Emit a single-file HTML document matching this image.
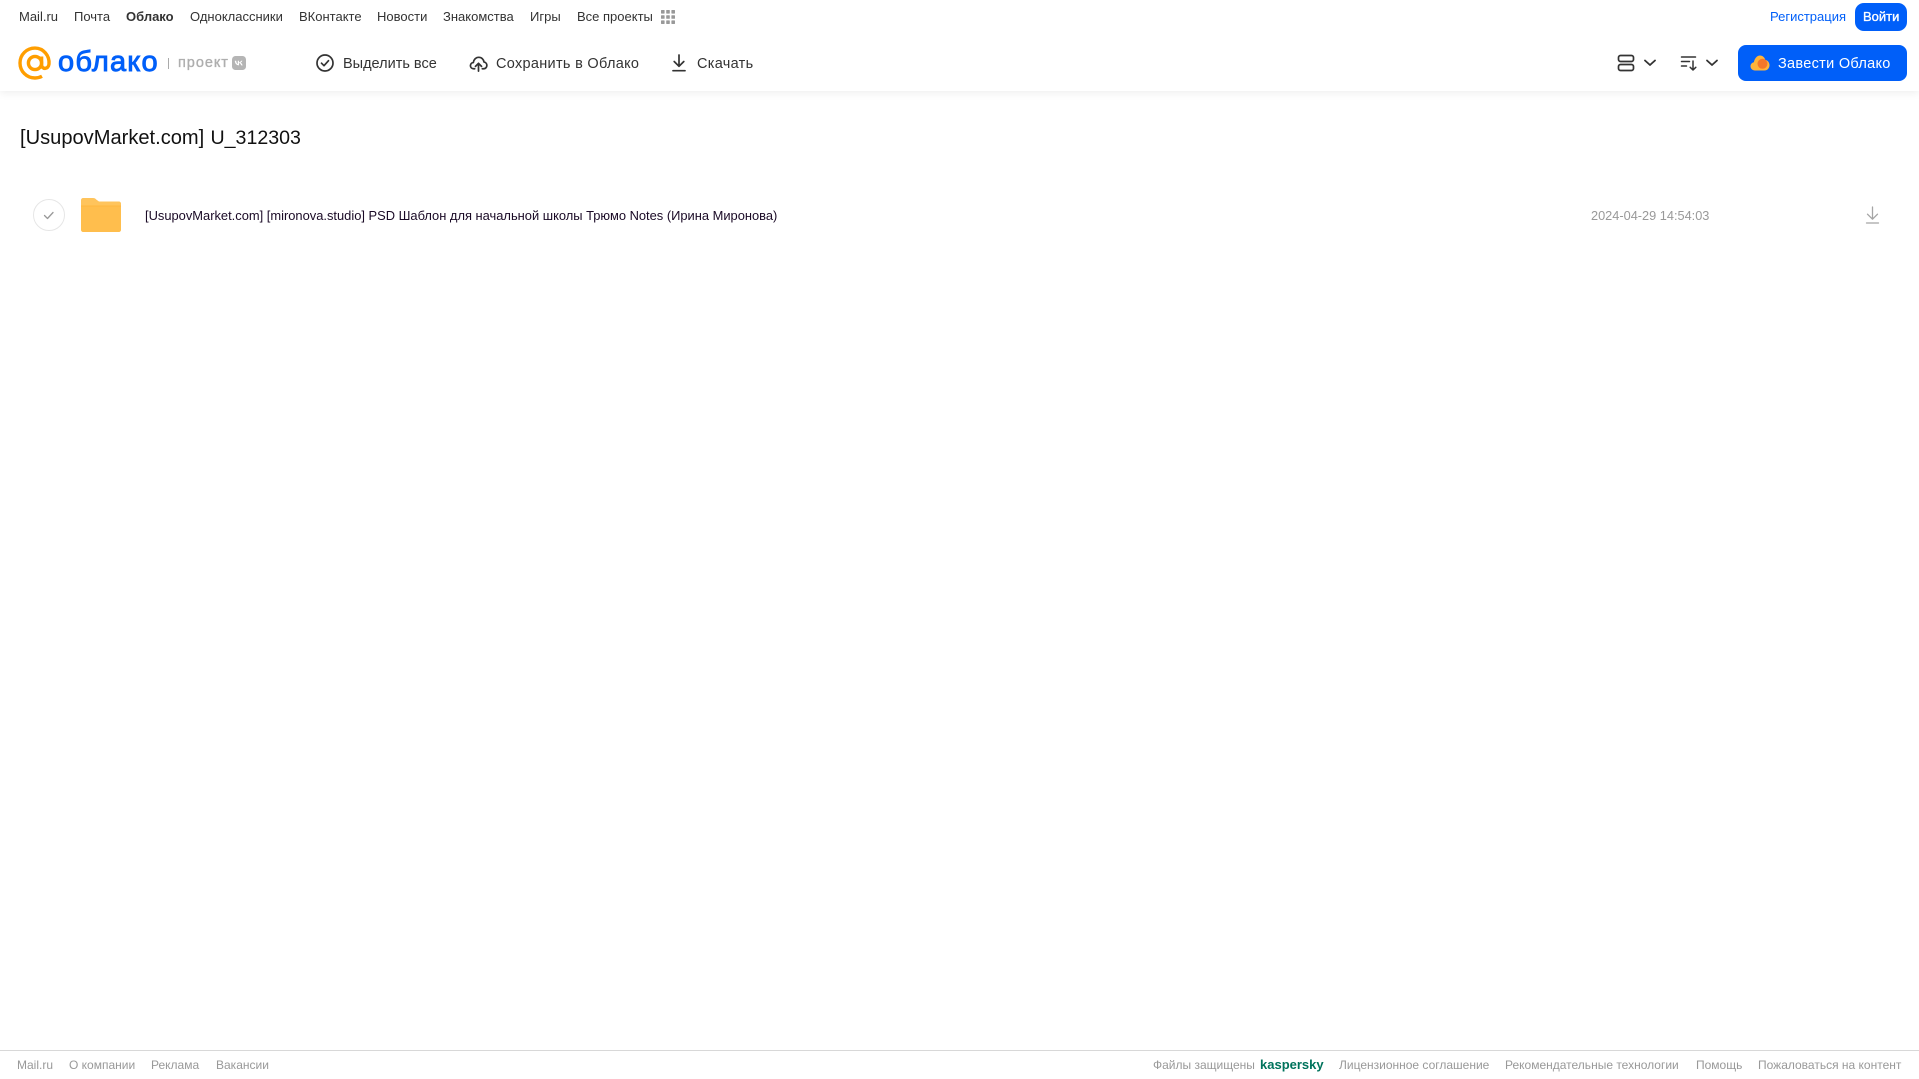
<!DOCTYPE html>
<html lang="ru"><head><meta charset="utf-8"><title>Облако</title>
<style>
html,body{margin:0;padding:0;background:#fff}
body{width:1919px;height:1079px;position:relative;overflow:hidden;font-family:"Liberation Sans","Noto Sans CJK JP",sans-serif}
.t{position:absolute;white-space:nowrap;line-height:16px;height:16px}
.n{top:9px;font-size:13px;color:#333}
.b{top:55.5px;font-size:14.5px;color:#333;letter-spacing:.3px}
.f{top:1057px;font-size:12px;color:#999}
svg{position:absolute;display:block}
#hd{position:absolute;left:0;top:0;width:1919px;height:91px;background:#fff;box-shadow:0 2px 8px rgba(0,0,0,.07)}
#btn1{position:absolute;left:1855px;top:3px;width:52px;height:28px;background:#005ff9;border-radius:9px}
#btn2{position:absolute;left:1738px;top:45px;width:169px;height:36px;background:#005ff9;border-radius:8px}
#fl{position:absolute;left:0;top:1050px;width:1919px;height:1px;background:#d8d8d8}
</style></head><body>
<div id="hd"></div>
<span class="t n" style="left:19px">Mail.ru</span>
<span class="t n" style="left:74px">Почта</span>
<span class="t n" style="left:126px;font-weight:bold">Облако</span>
<span class="t n" style="left:190px">Одноклассники</span>
<span class="t n" style="left:299px">ВКонтакте</span>
<span class="t n" style="left:377px">Новости</span>
<span class="t n" style="left:443px">Знакомства</span>
<span class="t n" style="left:530px">Игры</span>
<span class="t n" style="left:577px">Все проекты</span>
<svg style="left:660px;top:9px" width="16" height="16" viewBox="0 0 16 16" fill="#999"><rect x="1" y="1" width="3.6" height="3.6" rx=".6"/><rect x="6.2" y="1" width="3.6" height="3.6" rx=".6"/><rect x="11.4" y="1" width="3.6" height="3.6" rx=".6"/><rect x="1" y="6.2" width="3.6" height="3.6" rx=".6"/><rect x="6.2" y="6.2" width="3.6" height="3.6" rx=".6"/><rect x="11.4" y="6.2" width="3.6" height="3.6" rx=".6"/><rect x="1" y="11.4" width="3.6" height="3.6" rx=".6"/><rect x="6.2" y="11.4" width="3.6" height="3.6" rx=".6"/><rect x="11.4" y="11.4" width="3.6" height="3.6" rx=".6"/></svg>
<span class="t n" style="left:1770px;color:#005ff9">Регистрация</span>
<div id="btn1"></div>
<span class="t n" style="left:1863px;color:#fff;-webkit-text-stroke:.35px #fff">Войти</span>

<svg style="left:18px;top:46px" width="34" height="34" viewBox="0 0 34 34" fill="none" stroke="#ff9e00" stroke-width="3.4"><circle cx="17" cy="17" r="6.6"/><path d="M23.6 10.5v8.2c0 5 6.8 5 7.4-.6.8-8.2-5.5-16-14-16C8.500 2.100 2 8.700 2 17s6.500 15 15 15c2.800 0 5-.6 7-1.700"/></svg>
<span class="t" id="logo" style="left:58px;top:44px;height:36px;line-height:36px;font-size:29px;color:#005ff9;-webkit-text-stroke:.9px #005ff9;letter-spacing:1.2px;">облако</span>
<div style="position:absolute;left:168px;top:58px;width:1px;height:11px;background:#aaa"></div>
<span class="t" style="left:178px;top:55px;font-size:14.5px;color:#aeaeae;-webkit-text-stroke:.35px #aeaeae;letter-spacing:.95px">проект</span>
<svg style="left:232px;top:56px" width="14" height="14" viewBox="0 0 14 14"><rect width="14" height="14" rx="3.500" fill="#b5b5b5"/><path d="M2.800 4.800c.2 3 1.700 4.600 4.200 4.600V7c1 .1 1.700.9 2.200 2.400h1.500C10.200 8 9.500 7 8.600 6.600c.8-.5 1.400-1 1.800-1.900H9c-.4 1-1 1.500-2 1.700V4.700H5.800v3.300C4.900 7.700 4.300 6.500 4.200 4.800z" fill="#fff"/></svg>

<svg style="left:315px;top:53px" width="20" height="20" viewBox="0 0 20 20" fill="none" stroke="#333" stroke-width="1.700"><circle cx="10" cy="10" r="8"/><path d="M6.500 10.200l2.500 2.500 4.500-5" stroke-linecap="round" stroke-linejoin="round"/></svg>
<span class="t b" style="left:343px;letter-spacing:0">Выделить все</span>
<svg style="left:469px;top:54px" width="19" height="19" viewBox="0 0 20 20" fill="none" stroke="#333" stroke-width="1.800" stroke-linecap="round" stroke-linejoin="round"><path d="M6 15.500H5C2.800 15.500 1.500 14 1.500 12.200 1.500 10.400 3 9 4.600 9 5 5.800 7.300 3.500 10.300 3.500c3 0 5.200 2.300 5.500 5 1.700.2 3 1.700 3 3.500 0 1.900-1.400 3.500-3.300 3.500H14"/><path d="M10 18V10M6.800 13L10 9.800 13.200 13"/></svg>
<span class="t b" style="left:496px">Сохранить в Облако</span>
<svg style="left:669px;top:53px" width="20" height="20" viewBox="0 0 20 20" fill="none" stroke="#333" stroke-width="1.700" stroke-linecap="round" stroke-linejoin="round"><path d="M10 2v11M5.200 8.500L10 13.300l4.800-4.800"/><path d="M4 17.700h12"/></svg>
<span class="t b" style="left:697px">Скачать</span>

<svg style="left:1617px;top:54px" width="18" height="18" viewBox="0 0 18 18" fill="none" stroke="#333" stroke-width="1.700"><rect x="1.500" y="1.500" width="15" height="6" rx="2"/><rect x="1.500" y="10.500" width="15" height="6" rx="2"/></svg>
<svg style="left:1643px;top:58px" width="14" height="10" viewBox="0 0 14 10" fill="none" stroke="#333" stroke-width="1.800" stroke-linecap="round" stroke-linejoin="round"><path d="M2 2.500l5 4.500 5-4.500"/></svg>
<svg style="left:1680px;top:54px" width="18" height="18" viewBox="0 0 18 18" fill="none" stroke="#333" stroke-width="1.500" stroke-linecap="round" stroke-linejoin="round"><path d="M1.500 3h14M1.500 7.500h8M1.500 12h5"/><path d="M13 7v9M10.200 13.300L13 16l2.800-2.700"/></svg>
<svg style="left:1705px;top:58px" width="14" height="10" viewBox="0 0 14 10" fill="none" stroke="#333" stroke-width="1.800" stroke-linecap="round" stroke-linejoin="round"><path d="M2 2.500l5 4.500 5-4.500"/></svg>

<div id="btn2"></div>
<svg style="left:1750px;top:54px" width="20" height="18" viewBox="0 0 20 18"><path d="M5 16.500c-2.500 0-4.500-1.800-4.500-4.200 0-2.100 1.500-3.700 3.400-4C4.500 4.500 7 1.500 10 1.500c2.700 0 4.700 2 5.300 4.500 2.300.2 4.200 2.400 4.200 5.100 0 3-2.200 5.400-5 5.400z" fill="#ffb43a"/><circle cx="12.500" cy="9.800" r="5" fill="#f4772a"/></svg>
<span class="t b" style="left:1778px;color:#fff">Завести Облако</span>

<span class="t" style="left:20px;top:126px;height:24px;line-height:24px;font-size:20.1px;color:#111">[UsupovMarket.com]</span>
<span class="t" style="left:210.500px;top:126px;height:24px;line-height:24px;font-size:19.6px;color:#111">U_312303</span>

<svg style="left:33px;top:199px" width="32" height="32" viewBox="0 0 32 32" fill="none"><circle cx="16" cy="16" r="15.500" stroke="#e6e6e6"/><path d="M11.500 16.500l3 3 5.500-6" stroke="#999" stroke-width="1.300" stroke-linecap="round" stroke-linejoin="round"/></svg>
<svg style="left:81px;top:198px" width="40" height="34" viewBox="0 0 40 34"><path d="M2 0h10c1.500 0 2.500.6 3.500 1.700L18 3.500h20c1 0 2 1 2 2V8H0V2C0 1 1 0 2 0z" fill="#ffc45c"/><path d="M0 8h40v24c0 1-1 2-2 2H2c-1 0-2-1-2-2z" fill="#ffbe4d"/><rect y="7.500" width="40" height="1" fill="#ffb73e"/></svg>
<span class="t" style="left:145px;top:208px;font-size:12.9px;color:#1a0a26">[UsupovMarket.com] [mironova.studio] PSD Шаблон для начальной школы Трюмо Notes (Ирина Миронова)</span>
<span class="t" style="left:1591px;top:208px;font-size:12.75px;color:#999">2024-04-29 14:54:03</span>
<svg style="left:1863px;top:205px" width="19" height="20" viewBox="0 0 19 20" fill="none" stroke="#a5a5a5" stroke-width="1.300" stroke-linecap="round" stroke-linejoin="round"><path d="M9.500 2v12M4.500 9.200l5 5 5-5"/><path d="M3.500 18h12"/></svg>

<div id="fl"></div>
<span class="t f" style="left:17px">Mail.ru</span>
<span class="t f" style="left:69px">О компании</span>
<span class="t f" style="left:151px">Реклама</span>
<span class="t f" style="left:216px">Вакансии</span>
<span class="t f" style="left:1153px">Файлы защищены</span>
<span class="t f" style="left:1260px;font-weight:bold;font-size:13px;color:#00735c">kaspersky</span>
<span class="t f" style="left:1339px">Лицензионное соглашение</span>
<span class="t f" style="left:1505px">Рекомендательные технологии</span>
<span class="t f" style="left:1696px">Помощь</span>
<span class="t f" style="left:1758px">Пожаловаться на контент</span>
</body></html>
